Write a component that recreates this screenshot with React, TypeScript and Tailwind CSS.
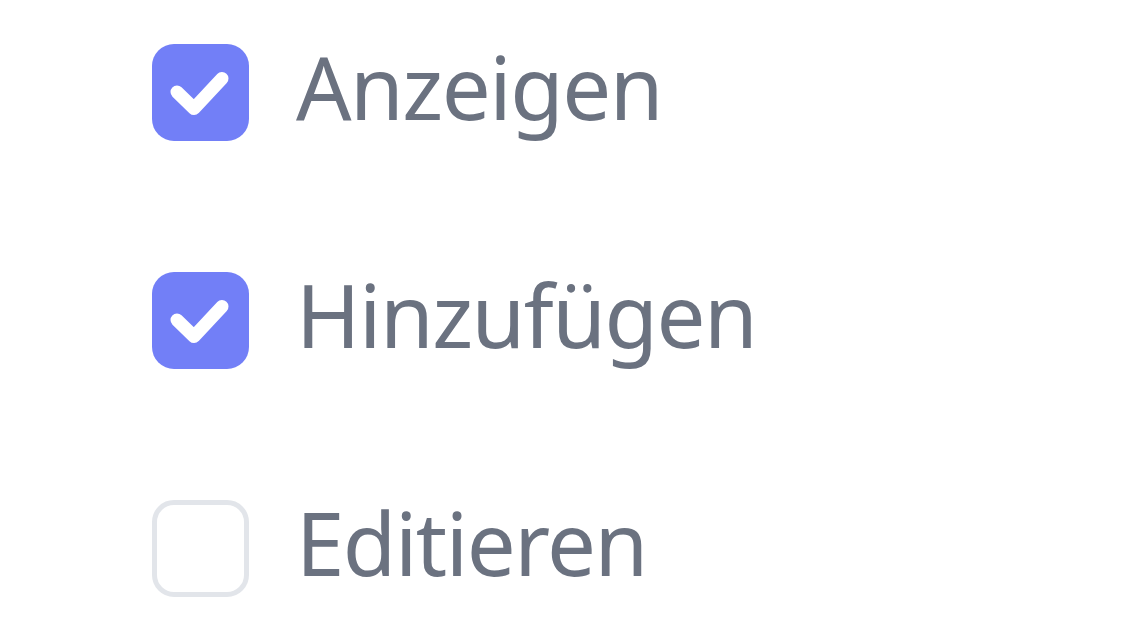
import { useState } from "react";

const items = [
  { label: "Anzeigen", checked: true },
  { label: "Hinzufügen", checked: true },
  { label: "Editieren", checked: false },
];

function CheckBox({ checked }: { checked: boolean }) {
  if (!checked) {
    return (
      <div className="w-[97px] h-[97px] shrink-0 rounded-[22px] border-[5px] border-[#e2e5ea] bg-white" />
    );
  }
  return (
    <div className="w-[97px] h-[97px] shrink-0 rounded-[22px] bg-[#727ff7] flex items-center justify-center">
      <svg width="97" height="97" viewBox="0 0 97 97" fill="none">
        <path
          d="M25 48 L42 64.5 L70 34.5"
          stroke="white"
          strokeWidth="13"
          strokeLinecap="round"
          strokeLinejoin="round"
        />
      </svg>
    </div>
  );
}

export default function App() {
  const [list] = useState(items);
  return (
    <div className="w-[1133px] h-[637px] bg-white overflow-hidden pt-[44px] pl-[152px] font-['Noto_Sans',sans-serif]">
      <div className="flex flex-col gap-[131px]">
        {list.map((item) => (
          <div key={item.label} className="flex items-center gap-[47px] h-[97px]">
            <CheckBox checked={item.checked} />
            <span className="text-[87px] leading-none text-[#6b7280] tracking-[-1.5px] pb-[12px]">
              {item.label}
            </span>
          </div>
        ))}
      </div>
    </div>
  );
}
